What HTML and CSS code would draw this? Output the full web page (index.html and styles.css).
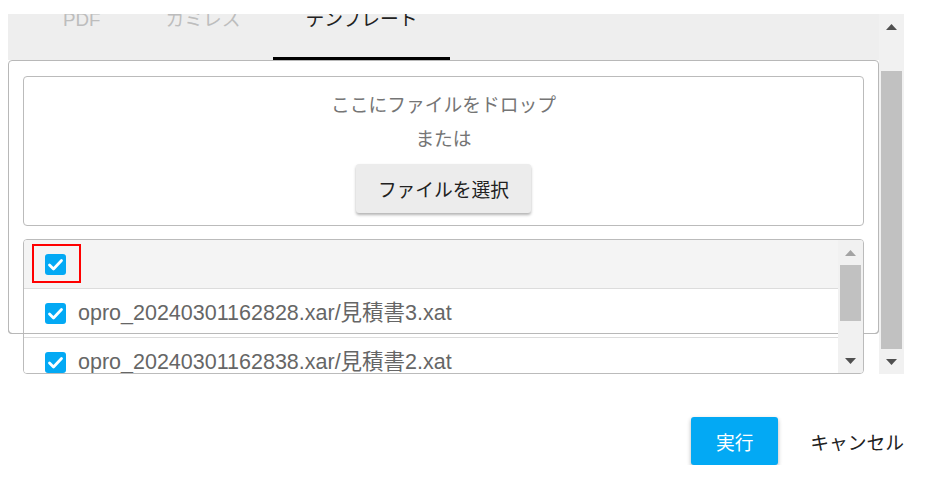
FILE: index.html
```html
<!DOCTYPE html>
<html lang="ja">
<head>
<meta charset="utf-8">
<link rel="stylesheet" href="styles.css">
</head>
<body>
<div class="page">
  <div class="scroller">
    <div class="viewport">
      <div class="content">
        <div class="tabs">
          <div class="tab">PDF</div>
          <div class="tab">カミレス</div>
          <div class="tab active">テンプレート</div>
        </div>
        <div class="panel">
          <div class="dropzone">
            <div class="drop-text">ここにファイルをドロップ</div>
            <div class="drop-text">または</div>
            <button class="select-btn">ファイルを選択</button>
          </div>
          <div class="list">
            <div class="list-rows">
              <div class="row header">
                <span class="cb-wrap">
                  <span class="cb"><svg viewBox="0 0 21 21" width="21" height="21"><polyline points="4.5,11 8.5,15 16.5,6.5" fill="none" stroke="#fff" stroke-width="2.8" stroke-linecap="round" stroke-linejoin="round"/></svg></span>
                  <span class="highlight"></span>
                </span>
              </div>
              <div class="row">
                <span class="cb"><svg viewBox="0 0 21 21" width="21" height="21"><polyline points="4.5,11 8.5,15 16.5,6.5" fill="none" stroke="#fff" stroke-width="2.8" stroke-linecap="round" stroke-linejoin="round"/></svg></span>
                <span class="name">opro_20240301162828.xar/見積書3.xat</span>
              </div>
              <div class="row">
                <span class="cb"><svg viewBox="0 0 21 21" width="21" height="21"><polyline points="4.5,11 8.5,15 16.5,6.5" fill="none" stroke="#fff" stroke-width="2.8" stroke-linecap="round" stroke-linejoin="round"/></svg></span>
                <span class="name">opro_20240301162838.xar/見積書2.xat</span>
              </div>
            </div>
            <div class="sb sb-list">
              <div class="sb-arrow"><svg width="11" height="6" viewBox="0 0 11 6"><polygon points="0,6 5.5,0 11,6" fill="#a3a3a3"/></svg></div>
              <div class="sb-thumb list-thumb"></div>
              <div class="sb-space"></div>
              <div class="sb-arrow"><svg width="11" height="6" viewBox="0 0 11 6"><polygon points="0,0 11,0 5.5,6" fill="#505050"/></svg></div>
            </div>
          </div>
        </div>
      </div>
    </div>
    <div class="sb sb-outer">
      <div class="sb-arrow"><svg width="11" height="6" viewBox="0 0 11 6"><polygon points="0,6 5.5,0 11,6" fill="#505050"/></svg></div>
      <div class="sb-gap"></div>
      <div class="sb-thumb outer-thumb"></div>
      <div class="sb-arrow"><svg width="11" height="6" viewBox="0 0 11 6"><polygon points="0,0 11,0 5.5,6" fill="#505050"/></svg></div>
    </div>
  </div>
  <div class="footer">
    <button class="primary">実行</button>
    <button class="flat">キャンセル</button>
  </div>
</div>
</body>
</html>
```
FILE: styles.css
```css
* { box-sizing: border-box; }
body {
  margin: 0;
  background: #fff;
  font-family: "Liberation Sans", "Noto Sans CJK JP", sans-serif;
}
.page { padding-top: 14px; }
.scroller {
  display: flex;
  margin-left: 8px;
  width: 896px;
  height: 360px;
}
.viewport {
  width: 871px;
  height: 360px;
  overflow: hidden;
  background: #fff;
}
.content { margin-top: -12px; }
.tabs {
  height: 58px;
  background: #eeeeee;
  display: flex;
  padding-left: 22.5px;
}
.tab {
  height: 58px;
  padding: 5px 32.5px 0;
  line-height: 26px;
  font-size: 18.75px;
  color: #bdbdbd;
  border-bottom: 3px solid transparent;
  white-space: nowrap;
}
.tab.active {
  color: #212121;
  border-bottom-color: #000;
}
.panel {
  position: relative;
  height: 274px;
  border: 1px solid #b8b8b8;
  border-radius: 4px;
  padding: 15px 14px 0;
}
.panel::after {
  content: "";
  position: absolute;
  left: -1px;
  right: -1px;
  bottom: -1px;
  height: 8px;
  border: 1px solid #b8b8b8;
  border-top: none;
  border-radius: 0 0 4px 4px;
  z-index: 1;
  pointer-events: none;
}
.dropzone {
  height: 150px;
  border: 1px solid #bbb;
  border-radius: 4px;
  padding: 12px 0 10px;
  display: flex;
  flex-direction: column;
  align-items: center;
}
.drop-text {
  font-size: 18.75px;
  line-height: 34px;
  color: #757575;
}
.select-btn {
  margin-top: 7px;
  height: 49px;
  padding: 0 22px;
  border: none;
  border-radius: 3px;
  background: #ececec;
  color: #212121;
  font-family: inherit;
  font-size: 18.75px;
  box-shadow: 0 2px 3px rgba(0, 0, 0, 0.3);
}
.list {
  margin-top: 13px;
  height: 135px;
  border: 1px solid #bbb;
  border-radius: 4px;
  display: flex;
  overflow: hidden;
  background: #fff;
}
.list-rows {
  flex: 1;
  overflow: hidden;
}
.row {
  height: 49px;
  border-bottom: 1px solid #dcdcdc;
  display: flex;
  align-items: center;
  padding-left: 21px;
  gap: 12px;
  background: #fff;
}
.row.header { background: #f4f4f4; }
.cb-wrap {
  position: relative;
  display: flex;
}
.cb {
  width: 21px;
  height: 21px;
  border-radius: 3px;
  background: #03a9f4;
  display: flex;
  flex-shrink: 0;
}
.highlight {
  position: absolute;
  left: -13px;
  top: -10px;
  width: 49px;
  height: 39px;
  border: 2px solid #ff0000;
}
.name {
  font-size: 21.5px;
  line-height: 26px;
  color: #666;
  white-space: nowrap;
}
.sb {
  width: 25px;
  background: #f1f1f1;
  display: flex;
  flex-direction: column;
  flex-shrink: 0;
}
.sb-list {
  position: relative;
  z-index: 2;
}
.sb-arrow {
  height: 25px;
  display: flex;
  align-items: center;
  justify-content: center;
  flex-shrink: 0;
}
.sb-thumb {
  margin: 0 2px;
  background: #c1c1c1;
  flex-shrink: 0;
}
.list-thumb { height: 56px; }
.sb-space { flex: 1; }
.sb-outer { height: 360px; }
.sb-gap { height: 32px; flex-shrink: 0; }
.outer-thumb { height: 278px; }
.footer {
  display: flex;
  justify-content: flex-end;
  align-items: center;
  padding-top: 43px;
  padding-right: 4px;
  gap: 10px;
}
.primary {
  width: 87px;
  height: 48px;
  border: none;
  border-radius: 3px;
  background: #03a9f4;
  color: #fff;
  font-family: inherit;
  font-size: 18.75px;
  box-shadow: 0 2px 4px rgba(0, 0, 0, 0.3);
}
.flat {
  height: 48px;
  padding: 0 22px;
  border: none;
  background: none;
  color: #212121;
  font-family: inherit;
  font-size: 18.75px;
}
```
